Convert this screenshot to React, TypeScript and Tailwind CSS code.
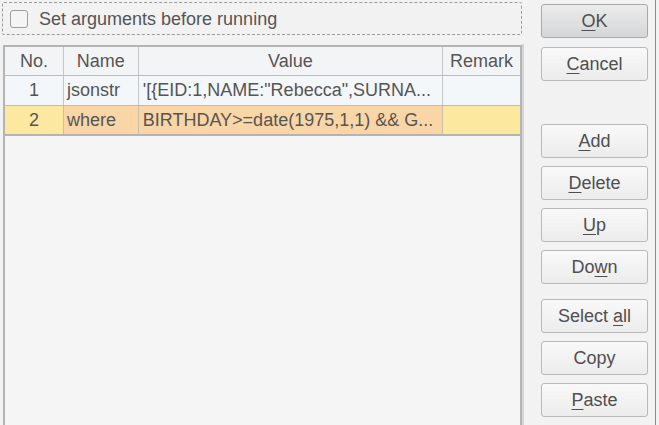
import React from 'react';

const font = { fontFamily: '"Liberation Sans", Arial, sans-serif' };

type Btn = { label: string; mn?: number; primary?: boolean };

const Button: React.FC<Btn> = ({ label, mn, primary }) => {
  const idx = mn ?? -1;
  return (
    <button
      className={`w-[107px] h-[34px] rounded-[3px] border text-[18px] text-[#4f4f4f] leading-none flex items-center justify-center ${
        primary
          ? 'bg-gradient-to-b from-[#ececec] to-[#d5d6d8] border-[#a9a9a9]'
          : 'bg-gradient-to-b from-[#f9f9f9] to-[#ececec] border-[#b9b9b9]'
      }`}
    >
      {idx < 0 ? (
        label
      ) : (
        <span>
          {label.slice(0, idx)}
          <span className="underline underline-offset-[3px]">{label[idx]}</span>
          {label.slice(idx + 1)}
        </span>
      )}
    </button>
  );
};

const cols = ['w-[59px]', 'w-[75px]', 'w-[305px]', 'w-[77px]'];

const App: React.FC = () => {
  return (
    <div className="w-[659px] h-[425px] bg-[#f2f2f2] overflow-hidden flex" style={font}>
      {/* Left side */}
      <div className="w-[522px] flex flex-col pl-[2px] pt-[2px]">
        {/* Checkbox group */}
        <div className="h-[33px] w-[520px] border border-dashed border-[#9a9a9a] rounded-[2px] flex items-center pl-[7px]">
          <div className="w-[18px] h-[18px] rounded-[3px] border border-[#9d9d9d] bg-[#f4f4f4]" />
          <span className="ml-[11px] text-[18px] text-[#555555] leading-none">Set arguments before running</span>
        </div>

        {/* Table */}
        <div className="mt-[10px] ml-[1px] w-[519px] flex-1 border-2 border-[#b4b4b4] bg-[#f4f5f4] border-b-0">
          {/* Header */}
          <div className="flex h-[29px] bg-[#f3f4f5] border-b border-[#b9bcbf] text-[18px] text-[#555555]">
            {['No.', 'Name', 'Value', 'Remark'].map((h, i) => (
              <div
                key={h}
                className={`${cols[i]} flex items-center justify-center ${i < 3 ? 'border-r border-[#c4c6c8]' : ''}`}
              >
                {h}
              </div>
            ))}
          </div>
          {/* Row 1 */}
          <div className="flex h-[30px] bg-[#f4f7f9] border-b border-[#b9bcbf] text-[18px] text-[#555555]">
            <div className={`${cols[0]} flex items-center justify-center border-r border-[#c4c6c8]`}>1</div>
            <div className={`${cols[1]} flex items-center pl-[3px] border-r border-[#c4c6c8]`}>jsonstr</div>
            <div className={`${cols[2]} flex items-center pl-[4px] border-r border-[#c4c6c8] whitespace-nowrap overflow-hidden`}>
              '[{'{'}EID:1,NAME:"Rebecca",SURNA...
            </div>
            <div className={`${cols[3]}`} />
          </div>
          {/* Row 2 (selected) */}
          <div className="flex h-[30px] border-b-2 border-[#b4b4b4] text-[18px] text-[#555555]">
            <div className={`${cols[0]} flex items-center justify-center bg-[#fce8a1] border-r border-[#c9bfa6]`}>2</div>
            <div className={`${cols[1]} flex items-center pl-[3px] bg-[#fad6a6] border-r border-[#c9bfa6]`}>where</div>
            <div className={`${cols[2]} flex items-center pl-[4px] bg-[#fad6a6] border-r border-[#c9bfa6] whitespace-nowrap overflow-hidden`}>
              BIRTHDAY&gt;=date(1975,1,1) &amp;&amp; G...
            </div>
            <div className={`${cols[3]} bg-[#fde8a0]`} />
          </div>
        </div>
      </div>

      {/* Divider */}
      <div className="w-[2px] mt-[44px] bg-[#d4d5d6]" />

      {/* Buttons */}
      <div className="flex flex-col pl-[17px] pt-[4px]">
        <Button label="OK" mn={0} primary />
        <div className="h-[9px]" />
        <Button label="Cancel" mn={0} />
        <div className="h-[43px]" />
        <div className="flex flex-col gap-[8px]">
          <Button label="Add" mn={0} />
          <Button label="Delete" mn={0} />
          <Button label="Up" mn={0} />
          <Button label="Down" mn={2} />
        </div>
        <div className="h-[15px]" />
        <div className="flex flex-col gap-[8px]">
          <Button label="Select all" mn={7} />
          <Button label="Copy" />
          <Button label="Paste" mn={0} />
        </div>
      </div>

      {/* Right edge line */}
      <div className="ml-auto mr-[3px] w-[1px] bg-[#8a8a8a]" />
    </div>
  );
};

export default App;
